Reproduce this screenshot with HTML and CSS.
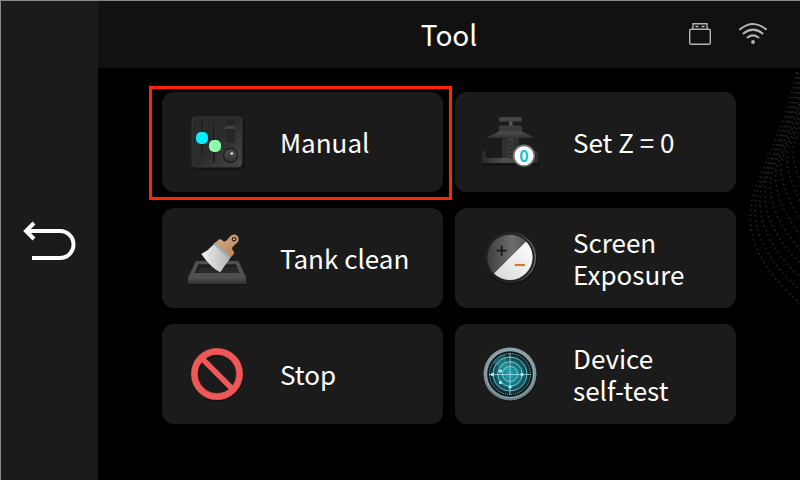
FILE: index.html
```html
<!DOCTYPE html>
<html lang="en">
<head>
    <meta charset="UTF-8">
    <meta name="viewport" content="width=device-width, initial-scale=1.0">
    <title>Tool</title>
    <link rel="stylesheet" href="styles.css">
</head>
<body>
    <aside class="sidebar">
        <button class="back" type="button" aria-label="Back">
            <svg width="54" height="42" viewBox="0 0 54 42" fill="none" stroke="#fff" stroke-width="4">
                <path d="M4 11H37a13.500 13.500 0 0 1 0 27H9"/>
                <path d="M11 3L3 11L11 19"/>
            </svg>
        </button>
    </aside>
    <div class="screen">
        <header class="topbar">
            <h1>Tool</h1>
            <div class="status">
                <svg width="24" height="24" viewBox="0 0 24 24" fill="none" stroke="#b4b4b4" stroke-width="1.4">
                    <rect x="1.7" y="7.2" width="20.6" height="15" rx="1.5"/>
                    <path d="M5 7V1.700h14V7M7.500 4.500h3M13.500 4.500h3"/>
                </svg>
                <svg width="30" height="24" viewBox="0 0 30 24" fill="none" stroke="#b4b4b4" stroke-width="2" stroke-linecap="round">
                    <path d="M2 7.300Q15 -3.300 28 7.300M5.500 11.500Q15 3.700 24.500 11.500M9.500 15.500Q15 11.200 20.500 15.500"/>
                    <circle cx="15" cy="20" r="1.9" fill="#b4b4b4" stroke="none"/>
                </svg>
            </div>
        </header>
        <main class="content">
            <svg class="dots" width="60" height="250" viewBox="0 0 60 250" fill="none" stroke="#202226" stroke-width="1.9" stroke-linecap="round" stroke-dasharray="0 5" aria-hidden="true">
                <path d="M57 0C50 45 28 88 15 122C0 165 22 203 62 237"/>
                <path d="M58 5C52 50 32 86 18 122C7 162 29 194 62 224"/>
                <path d="M59 10C53 52 34 84 22 118C13 154 35 186 62 211"/>
                <path d="M60 15C55 52 37 82 26 112C20 146 39 174 62 198"/>
                <path d="M60 25C55 56 40 80 31 107C26 136 43 162 62 184"/>
                <path d="M60 32C56 58 43 79 36 101C33 126 46 149 62 169"/>
                <path d="M60 40C56 62 46 77 41 95C40 116 50 135 62 153"/>
                <path d="M60 46C57 64 50 76 47 88C47 105 54 121 62 136"/>
                <path d="M60 55C58 68 54 76 53 84C54 97 58 108 62 118"/>
            </svg>
            <div class="tools">
                <button class="tool selected" type="button">
                    <svg width="64" height="64" viewBox="0 0 64 64">
                        <defs>
                            <linearGradient id="panel" x1="0" y1="0" x2="1" y2="1">
                                <stop offset="0" stop-color="#292929"/>
                                <stop offset="0.5" stop-color="#2c2c2c"/>
                                <stop offset="1" stop-color="#484848"/>
                            </linearGradient>
                            <linearGradient id="metal" x1="0" y1="0" x2="0" y2="1">
                                <stop offset="0" stop-color="#505050"/>
                                <stop offset="1" stop-color="#303030"/>
                            </linearGradient>
                        </defs>
                        <rect x="9" y="10" width="51" height="50" rx="4" fill="#151515"/>
                        <rect x="7" y="7" width="50" height="50" rx="4" fill="url(#panel)" stroke="#363636"/>
                        <path d="M17.500 11V43M29 15V52" stroke="#1f1f1f" stroke-width="2" stroke-linecap="round"/>
                        <path d="M19 11V43M30.500 15V52" stroke="#343434"/>
                        <path d="M42 11h7v3h-7zM42 19h7v13h-7z" fill="#272727" stroke="#222"/>
                        <path d="M40 16h10v3h-10z" fill="#424242"/>
                        <rect x="11" y="22" width="12" height="12" rx="5" fill="#00f0ff"/>
                        <rect x="24" y="30" width="12" height="12" rx="5" fill="#8affae"/>
                        <circle cx="45.5" cy="45.5" r="7" fill="url(#metal)" stroke="#1c1c1c" stroke-width="1.3"/>
                        <circle cx="46.8" cy="43.6" r="1.4" fill="#ddd"/>
                    </svg>
                    <span>Manual</span>
                </button>
                <button class="tool" type="button">
                    <svg width="64" height="64" viewBox="0 0 64 64">
                        <defs>
                            <linearGradient id="tray">
                                <stop offset="0" stop-color="#2a2a2a"/>
                                <stop offset="0.4" stop-color="#505050"/>
                                <stop offset="1" stop-color="#2d2d2d"/>
                            </linearGradient>
                        </defs>
                        <rect x="5" y="50" width="56" height="6" rx="2" fill="#141414"/>
                        <rect x="24" y="27" width="17" height="22" fill="#303030"/>
                        <path d="M30 28h5v20h-5z" fill="#3c3c3c"/>
                        <path d="M32.500 31V48" stroke="#222" stroke-width="2" stroke-dasharray="2 2"/>
                        <path d="M31 11h3.500v5H31z" fill="#555"/>
                        <rect x="21" y="7" width="23" height="4.5" rx="1.5" fill="#444"/>
                        <rect x="21" y="15.5" width="23" height="7" rx="1" fill="#3b3b3b"/>
                        <path d="M21 21.500H44L57 28H8z" fill="url(#metal)"/>
                        <path d="M4 42q0-1 1-1h1.500q1 0 1 1v6H56v-6q0-1 1-1h2q1 0 1 1v10q0 1-1 1H5q-1 0-1-1z" fill="url(#tray)"/>
                        <circle cx="46" cy="45.7" r="10.3" fill="#fff" stroke="#747474" stroke-width="1.6"/>
                        <text class="zero" x="46" y="52" text-anchor="middle">0</text>
                    </svg>
                    <span>Set Z = 0</span>
                </button>
                <button class="tool" type="button">
                    <svg width="64" height="64" viewBox="0 0 64 64">
                        <defs>
                            <linearGradient id="bristle">
                                <stop offset="0" stop-color="#f2f2f2"/>
                                <stop offset="1" stop-color="#b5b5b5"/>
                            </linearGradient>
                            <linearGradient id="wood" x1="0" y1="0" x2="1" y2="1">
                                <stop offset="0" stop-color="#d9ac80"/>
                                <stop offset="1" stop-color="#b48359"/>
                            </linearGradient>
                        </defs>
                        <path d="M3 57H61V59H3z" fill="#121212"/>
                        <path d="M11 35H53.500L61 51.500V58H3V51.500z" fill="#505050"/>
                        <path d="M3 51.500H61V58H3z" fill="url(#metal)"/>
                        <path d="M13.500 38.500H51L54.500 47H10z" fill="#292929"/>
                        <path d="M13.500 38.500H51L52 41H15L12 47H10z" fill="#1d1d1d"/>
                        <path d="M29 18L44.500 33.500Q40 39 35.300 46.300Q26 42 16.300 28Q24 24 29 18z" fill="url(#bristle)"/>
                        <path d="M30 24L23 30M36 29L27 36M40 32L33 40" stroke="#c4c4c4" stroke-width="0.8"/>
                        <path d="M30.500 16.500L34 13.500Q36 12.500 37.500 14.500Q40 16.500 42 14L45.500 10A4.600 4.600 0 1 1 52.500 16.500L48.500 20Q46 22.500 48 24.500Q50 26.500 48.500 28.500L45.500 31.500z" fill="url(#wood)"/>
                        <path d="M29.500 17L45 32.500" stroke="#a9bac9" stroke-width="2.4"/>
                        <circle cx="49" cy="13.3" r="1.6" fill="#ddd" stroke="#292522" stroke-width="1.3"/>
                    </svg>
                    <span>Tank clean</span>
                </button>
                <button class="tool" type="button">
                    <svg width="64" height="64" viewBox="0 0 64 64">
                        <defs>
                            <linearGradient id="dark">
                                <stop offset="0" stop-color="#3e3e3e"/>
                                <stop offset="0.55" stop-color="#6d6d6d"/>
                                <stop offset="1" stop-color="#4a4a4a"/>
                            </linearGradient>
                            <linearGradient id="rim">
                                <stop offset="0" stop-color="#202020"/>
                                <stop offset="0.6" stop-color="#2a2a2a"/>
                                <stop offset="1" stop-color="#666"/>
                            </linearGradient>
                            <linearGradient id="light" x1="0" y1="1" x2="1" y2="0">
                                <stop offset="0" stop-color="#d8d8d8"/>
                                <stop offset="1" stop-color="#fff"/>
                            </linearGradient>
                        </defs>
                        <circle cx="33" cy="33" r="26" fill="#141414"/>
                        <circle cx="32.5" cy="31.5" r="24.8" fill="#222" stroke="url(#rim)" stroke-width="1.5"/>
                        <circle cx="32" cy="31.5" r="22.7" fill="url(#dark)"/>
                        <path d="M48.100 15.400A22.700 22.700 0 0 1 16 47.500z" fill="url(#light)"/>
                        <path d="M18.700 24.700H28.700M23.700 19.700V29.700" stroke="#171717" stroke-width="1.8"/>
                        <path d="M36.700 39H47" stroke="#d07a22" stroke-width="2.2"/>
                    </svg>
                    <span>Screen<br>Exposure</span>
                </button>
                <button class="tool" type="button">
                    <svg width="64" height="64" viewBox="0 0 64 64" fill="none">
                        <circle cx="33" cy="33.5" r="22.5" stroke="#111" stroke-width="7"/>
                        <circle cx="32" cy="32" r="22.5" stroke="#c74647" stroke-width="7"/>
                        <path d="M17 16.500L47 46.500" stroke="#ee5859" stroke-width="5.5"/>
                        <circle cx="32" cy="32" r="22.7" stroke="#ee5859" stroke-width="5.6"/>
                    </svg>
                    <span>Stop</span>
                </button>
                <button class="tool" type="button">
                    <svg width="64" height="64" viewBox="0 0 64 64" fill="none">
                        <defs>
                            <radialGradient id="radar">
                                <stop offset="0" stop-color="#22a9b6"/>
                                <stop offset="0.5" stop-color="#147480"/>
                                <stop offset="1" stop-color="#06191d"/>
                            </radialGradient>
                            <linearGradient id="ring" x1="0" y1="0" x2="0" y2="1">
                                <stop offset="0" stop-color="#8ea4aa"/>
                                <stop offset="1" stop-color="#667e86"/>
                            </linearGradient>
                        </defs>
                        <circle cx="33" cy="34" r="26" fill="#121212"/>
                        <circle cx="32" cy="32" r="26.5" fill="url(#ring)"/>
                        <circle cx="32" cy="32" r="23.8" stroke="#93a9af" stroke-width="1"/>
                        <circle cx="32" cy="32" r="22" fill="url(#radar)" stroke="#101618" stroke-width="1.5"/>
                        <path d="M32 32L14.500 21A21 21 0 0 1 27 12z" fill="#33b6c2" opacity="0.35"/>
                        <g stroke="#a8d8dc" stroke-width="0.8">
                            <circle cx="32" cy="32" r="7.5"/>
                            <circle cx="32" cy="32" r="12.2"/>
                            <circle cx="32" cy="32" r="16.8"/>
                            <circle cx="32" cy="32" r="20.5" stroke-dasharray="1 1"/>
                            <path d="M11 32.500H53M32 11V53"/>
                        </g>
                        <g fill="#8df3ff">
                            <circle cx="14.5" cy="32.5" r="1.7"/>
                            <circle cx="22.5" cy="29" r="1.7"/>
                            <circle cx="22.5" cy="40.5" r="1.7"/>
                            <circle cx="32" cy="45" r="1.7"/>
                            <circle cx="44" cy="32.5" r="1.7"/>
                        </g>
                    </svg>
                    <span>Device<br>self-test</span>
                </button>
            </div>
        </main>
    </div>
</body>
</html>
```
FILE: styles.css
```css
* {
    box-sizing: border-box;
}
body {
    margin: 0;
    min-height: 100vh;
    display: flex;
    background: #000;
    color: #fff;
    font-family: "Noto Sans CJK SC", "Noto Sans", sans-serif;
    border-top: 1px solid #8a8a8a;
    border-left: 1px solid #8a8a8a;
}
button {
    border: none;
    color: inherit;
    font: inherit;
    cursor: pointer;
}
svg {
    display: block;
    flex-shrink: 0;
}
.sidebar {
    width: 97px;
    flex-shrink: 0;
    display: flex;
    align-items: center;
    justify-content: center;
    background: #1b1b1b;
}
.back {
    padding: 0;
    background: none;
}
.screen {
    flex: 1;
    display: flex;
    flex-direction: column;
}
.topbar {
    display: grid;
    grid-template-columns: 1fr auto 1fr;
    align-items: center;
    height: 67px;
    padding: 0 32px 2px;
    background: #111;
}
h1 {
    grid-column: 2;
    margin: 0;
    font-size: 28px;
    font-weight: 400;
    line-height: 32px;
}
.status {
    display: flex;
    justify-content: flex-end;
    gap: 26px;
}
.content {
    position: relative;
    flex: 1;
    padding: 24px 64px;
}
.dots {
    position: absolute;
    top: 0;
    right: 0;
}
.tools {
    position: relative;
    display: grid;
    grid-template-columns: 1fr 1fr;
    gap: 16px 12px;
}
.tool {
    position: relative;
    display: flex;
    align-items: center;
    gap: 31px;
    min-height: 100px;
    padding: 0 23px;
    background: #1b1b1b;
    border-radius: 12px;
    font-size: 26px;
    line-height: 32px;
    text-align: left;
}
.selected::after {
    content: "";
    position: absolute;
    top: -6px;
    right: -9px;
    bottom: -8px;
    left: -13px;
    border: 3px solid #ff2600;
}
.zero {
    fill: #12c5d2;
    font-size: 16px;
    font-weight: 700;
}
```
